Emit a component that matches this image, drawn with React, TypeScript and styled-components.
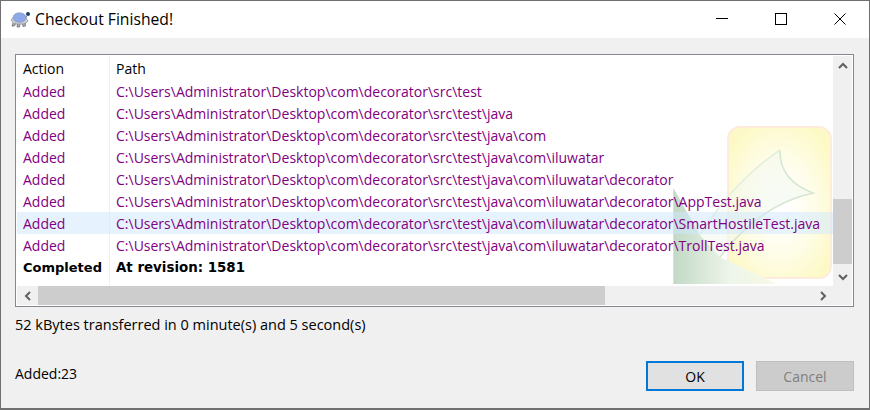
import styled, { createGlobalStyle } from "styled-components"

const GlobalStyle = createGlobalStyle`
  html, body {
    margin: 0;
    padding: 0;
    background: #f0f0f0;
  }
  * {
    box-sizing: border-box;
  }
`

const Window = styled.div`
  width: 870px;
  height: 410px;
  display: flex;
  flex-direction: column;
  background: #f0f0f0;
  border: 1px solid #707070;
  border-bottom: 2px solid #707070;
  font-family: "Open Sans", "Noto Sans", sans-serif;
  font-size: 14px;
  color: #000;
  overflow: hidden;
`

const TitleBar = styled.div`
  height: 37px;
  flex: none;
  display: flex;
  align-items: center;
  background: #fff;
  padding-left: 9px;
  padding-bottom: 1px;
`

const TitleText = styled.div`
  margin-left: 5px;
  font-size: 15.7px;
`

const TitleButtons = styled.div`
  margin-left: auto;
  display: flex;
`

const TitleButton = styled.div`
  width: 59px;
  height: 36px;
  display: flex;
  align-items: center;
  justify-content: center;
`

const Body = styled.div`
  flex: 1;
  display: flex;
  flex-direction: column;
  padding: 16px 15px 17px 14px;
`

const ListBox = styled.div`
  height: 253px;
  flex: none;
  border: 1px solid #828790;
  padding: 1px;
  background: #fff;
  display: grid;
  grid-template-columns: 1fr 19px;
  grid-template-rows: 1fr 19px;
`

const ListArea = styled.div`
  position: relative;
  overflow: hidden;
  padding-top: 2px;
`

const Row = styled.div<{ $selected?: boolean; $kind?: "head" | "added" | "done" }>`
  position: relative;
  height: 22px;
  padding-bottom: ${(p) => (p.$kind === "head" ? "2px" : "0")};
  display: flex;
  align-items: center;
  white-space: nowrap;
  color: ${(p) => (p.$kind === "added" ? "#800080" : "#000")};
  font-family: ${(p) => (p.$kind === "done" ? '"DejaVu Sans", sans-serif' : "inherit")};
  font-size: ${(p) => (p.$kind === "done" ? "13px" : "14px")};
  font-weight: ${(p) => (p.$kind === "done" ? 700 : 400)};
  background: ${(p) => (p.$selected ? "rgba(205, 232, 255, 0.5)" : "transparent")};
`

const ActionCell = styled.div`
  width: 92px;
  flex: none;
  padding-left: 6px;
`

const PathCell = styled.div<{ $large?: boolean }>`
  padding-left: 7px;
  font-size: ${(p) => (p.$large ? "13.4px" : "inherit")};
`

const ColumnLine = styled.div`
  position: absolute;
  left: 92px;
  top: 0;
  bottom: 0;
  width: 1px;
  background: #e9f0f8;
`

const Watermark = styled.svg`
  position: absolute;
  right: 0;
  bottom: 0;
`

const VScroll = styled.div`
  background: #f0f0f0;
  display: flex;
  flex-direction: column;
`

const HScroll = styled.div`
  background: #f0f0f0;
  display: flex;
`

const ScrollCorner = styled.div`
  background: #f0f0f0;
`

const ArrowBox = styled.div<{ $long?: boolean }>`
  flex: none;
  width: ${(p) => (p.$long ? "21px" : "19px")};
  height: 19px;
  display: flex;
  align-items: center;
  justify-content: center;
`

const ScrollSpace = styled.div`
  flex: 1;
  display: flex;
  flex-direction: column;
`

const VThumb = styled.div`
  height: 65px;
  margin-top: 124px;
  background: #cdcdcd;
`

const HThumb = styled.div`
  width: 567px;
  height: 100%;
  background: #cdcdcd;
`

const Status = styled.div`
  margin-top: 8px;
  height: 20px;
  line-height: 20px;
  font-size: 14.5px;
`

const Footer = styled.div`
  margin-top: auto;
  display: flex;
  align-items: center;
  justify-content: space-between;
`

const Added = styled.div`
  margin-bottom: 6px;
`

const Buttons = styled.div`
  display: flex;
  gap: 12px;
`

const Button = styled.div<{ $primary?: boolean }>`
  width: 98px;
  height: 30px;
  display: flex;
  align-items: center;
  justify-content: center;
  background: ${(p) => (p.$primary ? "#e1e1e1" : "#cccccc")};
  border: ${(p) => (p.$primary ? "2px solid #0078d7" : "1px solid #bfbfbf")};
  color: ${(p) => (p.$primary ? "#000" : "#7f7f7f")};
`

const base = "C:\\Users\\Administrator\\Desktop\\com\\decorator\\src\\test"
const deco = base + "\\java\\com\\iluwatar\\decorator"

const rows = [
  base,
  base + "\\java",
  base + "\\java\\com",
  base + "\\java\\com\\iluwatar",
  deco,
  deco + "\\AppTest.java",
  deco + "\\SmartHostileTest.java",
  deco + "\\TrollTest.java",
]

const Arrow = ({ dir }: { dir: "up" | "down" | "left" | "right" }) => {
  const pts = {
    up: "1,7 5,3 9,7",
    down: "1,3 5,7 9,3",
    left: "7,1 3,5 7,9",
    right: "3,1 7,5 3,9",
  }[dir]
  return (
    <svg width="10" height="10" viewBox="0 0 10 10">
      <polyline points={pts} fill="none" stroke="#606060" strokeWidth="2" />
    </svg>
  )
}

const TurtleIcon = () => (
  <svg width="20" height="20" viewBox="0 0 20 20">
    <path d="M1 11 L3.5 8 L16 9 L18 12 L15 15 L4 15 Z" fill="#c9ccd0" stroke="#8d9196" strokeWidth="0.7" />
    <ellipse cx="9.5" cy="8.5" rx="6.5" ry="4.8" fill="#8ea9ea" stroke="#7f8fb8" strokeWidth="0.5" />
    <path d="M3 14 L2 17 L4.5 17 L5.5 14.5 M7.5 15 L7 18 L9.5 18 L10 15 M12.5 15 L13 17.5 L15.5 17 L15 14" fill="#a8acb2" stroke="#6e7278" strokeWidth="0.8" />
    <circle cx="18" cy="5" r="2" fill="#1d3f66" />
    <path d="M16.8 7 L15.5 9" stroke="#8a9098" strokeWidth="1.2" />
  </svg>
)

const App = () => {
  return (
    <>
      <GlobalStyle />
      <Window>
        <TitleBar>
          <TurtleIcon />
          <TitleText>Checkout Finished!</TitleText>
          <TitleButtons>
            <TitleButton>
              <svg width="12" height="12" viewBox="0 0 12 12">
                <line x1="0" y1="5.5" x2="12" y2="5.5" stroke="#000" />
              </svg>
            </TitleButton>
            <TitleButton>
              <svg width="12" height="12" viewBox="0 0 12 12">
                <rect x="0.5" y="0.5" width="11" height="11" fill="none" stroke="#000" />
              </svg>
            </TitleButton>
            <TitleButton>
              <svg width="12" height="12" viewBox="0 0 12 12">
                <path d="M0.5 0.5 L11.5 11.5 M11.5 0.5 L0.5 11.5" stroke="#000" />
              </svg>
            </TitleButton>
          </TitleButtons>
        </TitleBar>
        <Body>
          <ListBox>
            <ListArea>
              <Watermark width="162" height="160" viewBox="0 0 162 160">
                <defs>
                  <radialGradient id="pad" cx="0.5" cy="0.52" r="0.6">
                    <stop offset="0.15" stopColor="#ffffff" />
                    <stop offset="0.55" stopColor="#fefde8" />
                    <stop offset="1" stopColor="#fdf9c6" />
                  </radialGradient>
                  <linearGradient id="leaf" x1="0" y1="0" x2="1" y2="0">
                    <stop offset="0" stopColor="#c2d9c6" />
                    <stop offset="0.55" stopColor="#eef5ea" />
                    <stop offset="1" stopColor="#f7fae4" />
                  </linearGradient>
                </defs>
                <rect x="57" y="1" width="103" height="151" rx="12" fill="url(#pad)" stroke="#fdebdc" strokeWidth="2" />
                <path d="M2.3 62 L2.3 158 L106 158 L49 131 L29 109 Z" fill="url(#leaf)" />
                <path d="M29 109 Q62 56 109 24 Q108 54 142 67 Q90 78 49 131 Z" fill="rgba(244, 249, 238, 0.6)" />
                <path d="M109 24 Q108 54 142 67 Q90 78 49 131" fill="none" stroke="#d6e6d2" strokeWidth="1.6" />
                <path d="M29 109 Q62 56 109 24" fill="none" stroke="#e4efdc" strokeWidth="1.6" />
              </Watermark>
              <ColumnLine />
              <Row $kind="head">
                <ActionCell>Action</ActionCell>
                <PathCell>Path</PathCell>
              </Row>
              {rows.map((path, i) => (
                <Row key={path} $kind="added" $selected={i === 6}>
                  <ActionCell>Added</ActionCell>
                  <PathCell>{path}</PathCell>
                </Row>
              ))}
              <Row $kind="done">
                <ActionCell>Completed</ActionCell>
                <PathCell $large>At revision: 1581</PathCell>
              </Row>
            </ListArea>
            <VScroll>
              <ArrowBox>
                <Arrow dir="up" />
              </ArrowBox>
              <ScrollSpace>
                <VThumb />
              </ScrollSpace>
              <ArrowBox>
                <Arrow dir="down" />
              </ArrowBox>
            </VScroll>
            <HScroll>
              <ArrowBox $long>
                <Arrow dir="left" />
              </ArrowBox>
              <ScrollSpace>
                <HThumb />
              </ScrollSpace>
              <ArrowBox $long>
                <Arrow dir="right" />
              </ArrowBox>
            </HScroll>
            <ScrollCorner />
          </ListBox>
          <Status>52 kBytes transferred in 0 minute(s) and 5 second(s)</Status>
          <Footer>
            <Added>Added:23</Added>
            <Buttons>
              <Button $primary>OK</Button>
              <Button>Cancel</Button>
            </Buttons>
          </Footer>
        </Body>
      </Window>
    </>
  )
}

export default App
